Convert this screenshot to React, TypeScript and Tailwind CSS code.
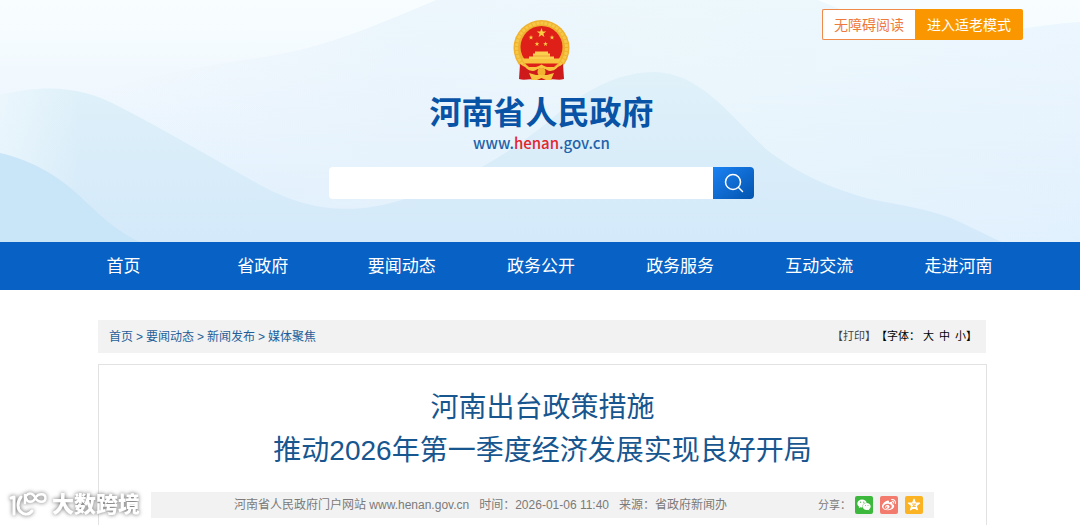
import React, { useState } from 'react';
import { FaWeibo, FaWeixin } from 'react-icons/fa';

const NAV_ITEMS = ['首页', '省政府', '要闻动态', '政务公开', '政务服务', '互动交流', '走进河南'];
const CRUMBS = ['首页', '要闻动态', '新闻发布', '媒体聚焦'];
const STAR = 'M0 -5 L1.2 -1.6 L4.8 -1.6 L1.9 0.6 L2.9 4.1 L0 2 L-2.9 4.1 L-1.9 0.6 L-4.8 -1.6 L-1.2 -1.6 Z';

function HeaderWaves() {
  return (
    <svg className="absolute inset-0 h-full w-full" viewBox="0 0 1080 242" preserveAspectRatio="none" aria-hidden="true">
      <defs>
        <linearGradient id="sky" x1="0" y1="0" x2="0" y2="1">
          <stop offset="0" stopColor="#f8feff" />
          <stop offset="0.35" stopColor="#f1f8fe" />
          <stop offset="1" stopColor="#dceefe" />
        </linearGradient>
        <linearGradient id="haze" x1="0" y1="0" x2="1" y2="0">
          <stop offset="0" stopColor="#e6f2fc" stopOpacity="0" />
          <stop offset="0.3" stopColor="#e6f2fb" stopOpacity="0.65" />
          <stop offset="0.6" stopColor="#e8f5fb" stopOpacity="0.7" />
          <stop offset="1" stopColor="#e4f2fd" stopOpacity="0.6" />
        </linearGradient>
        <linearGradient id="hill" x1="0" y1="0" x2="0" y2="1">
          <stop offset="0" stopColor="#e0f1f9" />
          <stop offset="0.5" stopColor="#d9edf9" />
          <stop offset="1" stopColor="#d4e9fa" />
        </linearGradient>
        <linearGradient id="hill-fade" x1="0" y1="0" x2="1" y2="0">
          <stop offset="0" stopColor="#f3fafe" stopOpacity="0.6" />
          <stop offset="0.08" stopColor="#f3fafe" stopOpacity="0" />
        </linearGradient>
      </defs>
      <rect width="1080" height="242" fill="url(#sky)" />
      <path d="M100 90 C200 62 250 62 300 50 C350 38 400 15 460 -10 H790 C850 10 880 32 940 36 C990 38 1020 26 1080 22 V242 H100 Z" fill="url(#haze)" />
      <path
        d="M0 95 C50 83 85 88 120 107 C170 133 215 160 262 186 C310 212 355 215 405 199 C460 182 500 160 548 122 C590 84 625 72 655 72 C700 74 725 110 767 150 C800 175 830 188 870 199 C900 205 935 210 960 222 C975 229 990 237 1002 242 H0 Z"
        fill="url(#hill)"
      />
      <path d="M0 95 C50 83 85 88 120 107 C170 133 215 160 262 186 H1000 V188 H0 Z" fill="url(#hill-fade)" />
      <path d="M0 153 C35 161 62 178 88 204 C105 220 120 233 140 242 H0 Z" fill="#c9e5f8" />
    </svg>
  );
}

function NationalEmblem() {
  return (
    <svg className="h-[61px] w-[57px]" viewBox="0 0 57 61" role="img" aria-label="国徽">
      <circle cx="28.5" cy="28" r="28" fill="#efb22f" />
      <circle cx="28.5" cy="28" r="25" fill="none" stroke="#f7c748" strokeWidth="3" strokeDasharray="3 1" />
      <circle cx="28.5" cy="27" r="21" fill="#df2019" />
      <path d="M9 38.5 H48 C46 43 43 46 40 48 H17 C13 46 11 43 9 38.5 Z" fill="#f8c43f" />
      <path d="M16 39 V36.5 H20 V33.5 H22 V31.5 H35 V33.5 H37 V36.5 H41 V39 Z" fill="#fbd04f" />
      <path d="M20 36 H37" stroke="#df8a28" strokeWidth="0.6" />
      <path d="M12 43.5 H45 L41 47 H16 Z" fill="#df2019" />
      <path d="M7 44 C12 48 18 49 24 48 L28.5 45 L33 48 C39 49 45 48 50 44 L51 59 C45 61 40 58 36 60 H21 C17 58 12 61 6 59 Z" fill="#cf1a1c" />
      <path d="M11 45 C17 50 24 47 28.5 44.5 C33 47 40 50 46 45 C43 51 37 52 34 50 C31 48 26 48 23 50 C20 52 14 51 11 45 Z" fill="#f8c43f" />
      <circle cx="28.5" cy="52" r="4" fill="#f3b331" />
      <path d="M16 53 L23 55 H34 L41 53 L38 60 H33 L28.5 58 L24 60 H19 Z" fill="#f8c43f" />
      <path d={STAR} transform="translate(28.500 13)" fill="#fbd043" />
      <path d={STAR} transform="translate(18 17.500) scale(0.5)" fill="#fbd043" />
      <path d={STAR} transform="translate(39 17.500) scale(0.5)" fill="#fbd043" />
      <path d={STAR} transform="translate(24 24) scale(0.5)" fill="#fbd043" />
      <path d={STAR} transform="translate(32.500 24) scale(0.5)" fill="#fbd043" />
    </svg>
  );
}

function Watermark() {
  return (
    <div className="pointer-events-none fixed bottom-1 left-2 flex items-center gap-1 text-white drop-shadow-[0_0_2px_#666666]">
      <svg className="h-8 w-10" viewBox="0 0 40 32" fill="none" stroke="currentColor" strokeWidth="3" strokeLinecap="round" strokeLinejoin="round" aria-hidden="true">
        <path d="M3 9 L6 8 V25" />
        <path d="M13 8 C9 13 9 20 13 23 C16 26 21 26 24 22" />
        <path d="M17 6 V14" strokeWidth="2.5" />
        <path d="M18 7 C21 3 25 4 27.500 9 C30 14 37.500 14 37.500 9 C37.500 4 30 4 27.500 9 C25 14 19 14 18 9" strokeWidth="2.5" />
      </svg>
      <span className="text-[22px] leading-8 font-black">大数跨境</span>
    </div>
  );
}

export default function App() {
  const [keyword, setKeyword] = useState('');

  return (
    <div className="flex min-h-screen flex-col bg-white font-['Liberation_Sans','Noto_Sans_CJK_SC',sans-serif]">

      {/* Header */}
      <header className="relative">
        <HeaderWaves />
        <div className="relative grid grid-cols-[minmax(0,1fr)_auto_minmax(0,1fr)] items-start pl-[3px]">
          <div className="col-start-2 flex flex-col items-center pt-5 pb-[43px]">
            <NationalEmblem />
            <h1 className="mt-3 text-[32px] leading-10 font-bold text-[#0853a5]">河南省人民政府</h1>
            <p className="font-['Noto_Sans_CJK_SC',sans-serif] text-[15px] leading-5 font-medium text-[#2463a9]">
              www.<span className="text-[#e5252c]">henan</span>.gov.cn
            </p>
            <form className="mt-3.5 flex h-8 w-[425px]" onSubmit={(e) => e.preventDefault()}>
              <input
                id="site-search"
                type="text"
                aria-label="搜索"
                value={keyword}
                onChange={(e) => setKeyword(e.target.value)}
                className="min-w-0 flex-1 rounded-l-sm bg-white px-3 text-sm text-gray-800 focus:outline-none"
              />
              <button
                type="submit"
                aria-label="搜索"
                className="flex w-[41px] items-center justify-center rounded-r-sm bg-linear-to-br from-[#1a82f4] to-[#0454ae] text-white"
              >
                <svg className="h-5 w-5" viewBox="0 0 20 20" fill="none" stroke="currentColor" strokeWidth="1.5" strokeLinecap="round">
                  <circle cx="9" cy="9" r="7.500" />
                  <path d="M14.500 14.500 L18.500 18.500" />
                </svg>
              </button>
            </form>
          </div>
          <div className="flex justify-end pt-[9px] pr-[57px] text-sm">
            <button type="button" className="h-[31px] w-[93px] rounded-l-xs border border-r-0 border-[#f08a4b] bg-white whitespace-nowrap text-[#ee7a3c]">
              无障碍阅读
            </button>
            <button type="button" className="h-[31px] w-[108px] rounded-r-xs bg-[#fa9600] whitespace-nowrap text-white">
              进入适老模式
            </button>
          </div>
        </div>
      </header>

      {/* Main nav */}
      <nav className="bg-[#0861c4] pt-0.5 pl-0.5">
        <ul className="mx-auto grid max-w-[974px] grid-cols-7">
          {NAV_ITEMS.map((item) => (
            <li key={item} className="text-center">
              <a href="#" className="block text-[17px] leading-[46px] text-white">{item}</a>
            </li>
          ))}
        </ul>
      </nav>

      <main className="flex flex-1 flex-col pt-[30px] pl-[5px]">
        <div className="mx-auto flex w-full max-w-[889px] flex-1 flex-col">

          {/* Breadcrumb row */}
          <div className="mr-px flex h-[33px] items-center justify-between bg-[#f2f2f2] pr-[9px] pl-[11px] text-xs">
            <div className="flex gap-[3px] text-[#1f5f99]">
              {CRUMBS.map((crumb, idx) => (
                <React.Fragment key={crumb}>
                  {idx > 0 && <span>&gt;</span>}
                  <a href="#">{crumb}</a>
                </React.Fragment>
              ))}
            </div>
            <div className="flex items-center text-[11px] text-black">
              <button type="button" className="text-[#444444]">【打印】</button>
              <span>【字体：</span>
              <div className="flex gap-[5px] pl-[3px]">
                <button type="button">大</button>
                <button type="button">中</button>
                <button type="button">小</button>
              </div>
              <span>】</span>
            </div>
          </div>

          {/* Article */}
          <article className="mt-[11px] flex-1 border border-b-0 border-[#e2e2e2] px-[52px] pt-[21px] pb-1.5">
            <h2 className="text-center text-[28px] leading-[43px] text-[#17568f]">
              河南出台政策措施
              <br />
              推动2026年第一季度经济发展实现良好开局
            </h2>
            <div className="mt-5 flex h-[26px] items-center justify-between bg-[#f2f2f2] pr-[11px] pl-[83px] text-xs text-[#7a7a7a]">
              <div className="flex gap-2.5">
                <span>河南省人民政府门户网站 www.henan.gov.cn</span>
                <span>时间：2026-01-06 11:40</span>
                <span>来源：省政府新闻办</span>
              </div>
              <div className="flex items-center gap-1">
                <span className="text-[11px]">分享：</span>
                <div className="flex gap-[7px] text-white">
                  <a href="#" aria-label="微信" className="flex h-[18px] w-[18px] items-center justify-center rounded-xs bg-[#3cb83c]">
                    <FaWeixin className="h-3.5 w-3.5" />
                  </a>
                  <a href="#" aria-label="微博" className="flex h-[18px] w-[18px] items-center justify-center rounded-xs bg-[#f27b6e]">
                    <FaWeibo className="h-3.5 w-3.5" />
                  </a>
                  <a href="#" aria-label="QQ空间" className="flex h-[18px] w-[18px] items-center justify-center rounded-xs bg-[#fbb323]">
                    <svg className="h-3.5 w-3.5" viewBox="-6 -6 12 12">
                      <path d={STAR} fill="currentColor" stroke="currentColor" strokeLinejoin="round" />
                      <path d="M-1.600 -0.800 H1.400 L-1.200 1.200 H1.600" fill="none" stroke="#fbb323" strokeWidth="0.8" />
                    </svg>
                  </a>
                </div>
              </div>
            </div>
          </article>
        </div>
      </main>

      <Watermark />
    </div>
  );
}
